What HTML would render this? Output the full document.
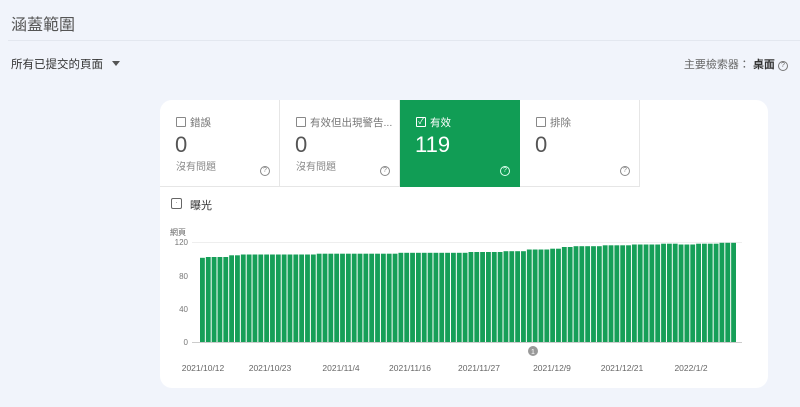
<!DOCTYPE html>
<html><head><meta charset="utf-8"><style>
body{margin:0;width:800px;height:407px;background:#f1f4fb;font-family:"Liberation Sans","Noto Sans CJK TC",sans-serif;position:relative;overflow:hidden;color:#333}
.abs{position:absolute}
.title{left:11px;top:11px;font-size:16px;color:#555}
.hr{left:8px;right:0;top:40px;height:1px;background:#e3e7ef}
.sel{left:11px;top:56px;font-size:11.5px;color:#333}
.tri{left:112px;top:61px;width:0;height:0;border-left:4px solid transparent;border-right:4px solid transparent;border-top:5px solid #555}
.right{right:12px;top:56px;font-size:11px;color:#666}
.card{left:160px;top:100px;width:608px;height:288px;background:#fff;border-radius:12px}
.tile{top:100px;height:86px;width:119px;border-right:1px solid #e6e6e6;border-bottom:1px solid #e6e6e6;background:#fff}
.tile .cb{position:absolute;left:16px;top:17px;width:8px;height:8px;border:1.2px solid #888;border-radius:1px}
.tile .lb{position:absolute;left:30px;top:15px;font-size:10.5px;color:#777}
.tile .n{position:absolute;left:15px;top:32px;font-size:22px;color:#555}
.tile .s{position:absolute;left:16px;top:58px;font-size:10px;color:#888}
.tile .q{position:absolute;right:9px;top:66px;width:8px;height:8px;border:1px solid #888;border-radius:50%;font-size:7px;line-height:8px;text-align:center;color:#888}
.g{background:#119d55;border-color:#119d55}
.g .cb{border-color:#fff}.g .lb,.g .n{color:#fff}.g .q{border-color:#dfe;color:#dfe}
</style></head><body>
<div class="abs title">涵蓋範圍</div>
<div class="abs hr"></div>
<div class="abs sel">所有已提交的頁面</div>
<div class="abs tri"></div>
<div class="abs right">主要檢索器：&nbsp;<b style="color:#333">桌面</b> <span style="display:inline-block;width:8px;height:8px;border:1px solid #777;border-radius:50%;font-size:7px;line-height:8px;text-align:center;vertical-align:1px">?</span></div>
<div class="abs card"></div>
<div class="abs tile" style="left:160px;border-top-left-radius:12px"><div class="cb"></div><div class="lb">錯誤</div><div class="n">0</div><div class="s">沒有問題</div><div class="q">?</div></div>
<div class="abs tile" style="left:280px"><div class="cb"></div><div class="lb">有效但出現警告...</div><div class="n">0</div><div class="s">沒有問題</div><div class="q">?</div></div>
<div class="abs tile g" style="left:400px"><div class="cb" style="text-align:center;color:#fff;font-size:8px;line-height:8px">✓</div><div class="lb">有效</div><div class="n">119</div><div class="q">?</div></div>
<div class="abs tile" style="left:520px"><div class="cb"></div><div class="lb">排除</div><div class="n">0</div><div class="q">?</div></div>
<div class="abs" style="left:171px;top:198px;width:9px;height:9px;border:1.2px solid #666;border-radius:2px;font-size:6px;line-height:8px;text-align:center">·</div>
<div class="abs" style="left:190px;top:197px;font-size:11px;color:#333">曝光</div>
<div class="abs" style="left:170px;top:227px;font-size:8px;color:#666">網頁</div>
<svg class="abs" style="left:0;top:0" width="800" height="407">
<g font-size="8" fill="#777" font-family="Liberation Sans" text-anchor="end">
<text x="188" y="245">120</text><text x="188" y="279">80</text><text x="188" y="312">40</text><text x="188" y="345">0</text></g>
<line x1="192" x2="742" y1="242.5" y2="242.5" stroke="#eee"/>
<g id="bars" fill="#169f58"></g>
<line x1="192" x2="742" y1="342.5" y2="342.5" stroke="#ccc"/>
<circle cx="533" cy="351" r="5" fill="#999"/><text x="533" y="354" font-size="7" fill="#fff" text-anchor="middle">1</text>
<g font-size="8.5" fill="#666" font-family="Liberation Sans" text-anchor="middle">
<text x="203" y="371">2021/10/12</text><text x="270" y="371">2021/10/23</text><text x="341" y="371">2021/11/4</text><text x="410" y="371">2021/11/16</text><text x="479" y="371">2021/11/27</text><text x="552" y="371">2021/12/9</text><text x="622" y="371">2021/12/21</text><text x="691" y="371">2022/1/2</text></g>
</svg>
<script>
var v=[101,102,102,102,102,104,104,105,105,105,105,105,105,105,105,105,105,105,105,105,106,106,106,106,106,106,106,106,106,106,106,106,106,106,107,107,107,107,107,107,107,107,107,107,107,107,108,108,108,108,108,108,109,109,109,109,111,111,111,111,112,112,114,114,115,115,115,115,115,116,116,116,116,116,117,117,117,117,117,118,118,118,117,117,117,118,118,118,118,119,119,119];
var g=document.getElementById('bars'),w=537/v.length,s='';
for(var i=0;i<v.length;i++){var h=v[i]*100/120;s+='<rect x="'+(200+i*w).toFixed(2)+'" y="'+(342-h).toFixed(1)+'" width="'+(w-1).toFixed(2)+'" height="'+h.toFixed(1)+'"/>';}
g.innerHTML=s;
</script>
</body></html>
